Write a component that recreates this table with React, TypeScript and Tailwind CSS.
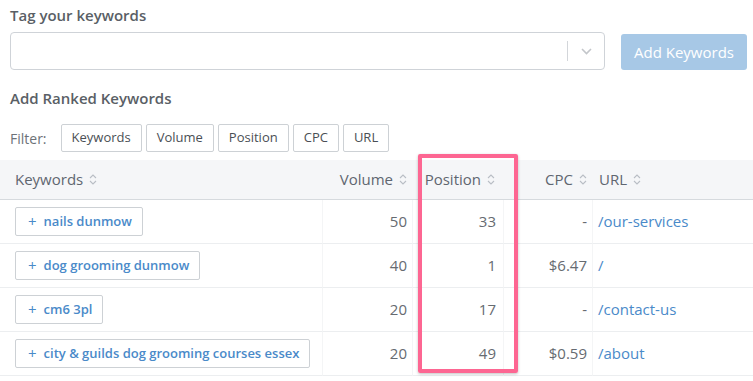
import { Fragment } from "react";

const rows = [
  { kw: "nails dunmow", volume: "50", position: "33", cpc: "-", url: "/our-services" },
  { kw: "dog grooming dunmow", volume: "40", position: "1", cpc: "$6.47", url: "/" },
  { kw: "cm6 3pl", volume: "20", position: "17", cpc: "-", url: "/contact-us" },
  { kw: "city & guilds dog grooming courses essex", volume: "20", position: "49", cpc: "$0.59", url: "/about" },
];

const filters = ["Keywords", "Volume", "Position", "CPC", "URL"];

function SortIcon() {
  return (
    <svg width="8" height="11" viewBox="0 0 8 11" fill="none" className="ml-[6px] shrink-0">
      <path d="M1 4 L4 1 L7 4" stroke="#b9bec5" strokeWidth="1.1" />
      <path d="M1 7 L4 10 L7 7" stroke="#b9bec5" strokeWidth="1.1" />
    </svg>
  );
}

function Header({ label, align, pr }: { label: string; align: "left" | "right"; pr?: string }) {
  return (
    <div className={`flex items-center h-full ${align === "right" ? `justify-end ${pr ?? "pr-[6px]"}` : "pl-[6px]"}`}>
      <span>{label}</span>
      <SortIcon />
    </div>
  );
}

export default function App() {
  return (
    <div className="relative w-[753px] h-[381px] bg-white overflow-hidden text-[#5f6670]" style={{ fontFamily: '"Open Sans", "Liberation Sans", sans-serif' }}>
      {/* Tag input */}
      <div className="pl-[10px] pr-[6px] pt-[5px]">
        <div className="text-[15px] font-semibold text-[#5a5f66] leading-[20px]">Tag your keywords</div>
        <div className="flex items-center gap-[16px] mt-[7px]">
          <div className="flex-1 h-[38px] rounded-[4px] border border-[#cfd3d8] flex items-center justify-end">
            <div className="w-px h-[20px] bg-[#d3d6da]" />
            <div className="w-[36px] flex justify-center">
              <svg width="11" height="7" viewBox="0 0 11 7" fill="none">
                <path d="M1 1 L5.5 5.5 L10 1" stroke="#c3c6ca" strokeWidth="1.6" />
              </svg>
            </div>
          </div>
          <button className="h-[36px] w-[126px] rounded-[3px] bg-[#a7c8e6] text-white text-[15px] mt-[2px]">Add Keywords</button>
        </div>
      </div>

      {/* Ranked keywords */}
      <div className="px-[10px] mt-[18px]">
        <div className="text-[15px] font-semibold text-[#5a5f66] leading-[20px]">Add Ranked Keywords</div>
        <div className="flex items-center mt-[16px]">
          <span className="text-[14px] text-[#6d7278] mr-[14px]">Filter:</span>
          <div className="flex gap-[4px]">
            {filters.map((f) => (
              <button key={f} className="h-[28px] px-[10px] border border-[#cdd1d5] rounded-[2px] text-[13px] text-[#4a4f55] bg-white">
                {f}
              </button>
            ))}
          </div>
        </div>
      </div>

      {/* Table */}
      <div className="mt-[8px] grid grid-cols-[323px_90px_91px_89px_160px] text-[15px]">
        <div className="h-[40px] bg-[#f5f6f8] border-b border-[#d6dade] flex items-center pl-[15px]">
          <span>Keywords</span>
          <SortIcon />
        </div>
        <div className="h-[40px] bg-[#f5f6f8] border-b border-[#d6dade]"><Header label="Volume" align="right" /></div>
        <div className="h-[40px] bg-[#f5f6f8] border-b border-[#d6dade]"><Header label="Position" align="right" pr="pr-[9px]" /></div>
        <div className="h-[40px] bg-[#f5f6f8] border-b border-[#d6dade]"><Header label="CPC" align="right" /></div>
        <div className="h-[40px] bg-[#f5f6f8] border-b border-[#d6dade]"><Header label="URL" align="left" /></div>

        {rows.map((r) => (
          <Fragment key={r.kw}>
            <div className="h-[44px] border-b border-b-[#eceef0] border-r border-r-[#f4f5f6] flex items-center pl-[15px]">
              <button className="h-[29px] pl-[12px] pr-[10px] border border-[#cdd1d5] rounded-[2px] text-[13px] font-semibold text-[#4a8ac9] flex items-center bg-white">
                <span className="font-normal text-[15px] mr-[7px] leading-none">+</span>
                {r.kw}
              </button>
            </div>
            <div className="h-[44px] border-b border-b-[#eceef0] border-r border-r-[#f4f5f6] flex items-center justify-end pr-[5px] text-[#666b71]">{r.volume}</div>
            <div className="h-[44px] border-b border-b-[#eceef0] border-r border-r-[#f4f5f6] flex items-center justify-end pr-[7px] text-[#666b71]">{r.position}</div>
            <div className="h-[44px] border-b border-b-[#eceef0] border-r border-r-[#f4f5f6] flex items-center justify-end pr-[5px] text-[#666b71]">{r.cpc}</div>
            <div className="h-[44px] border-b border-b-[#eceef0] flex items-center pl-[5px] text-[#4a8ac9]">{r.url}</div>
          </Fragment>
        ))}
      </div>

      {/* Highlight annotation */}
      <div className="absolute left-[418px] top-[154px] w-[100px] h-[219px] border-[4px] border-[#fd6692] rounded-[2px] shadow-[0_1px_3px_rgba(0,0,0,0.25)] pointer-events-none" />
    </div>
  );
}
